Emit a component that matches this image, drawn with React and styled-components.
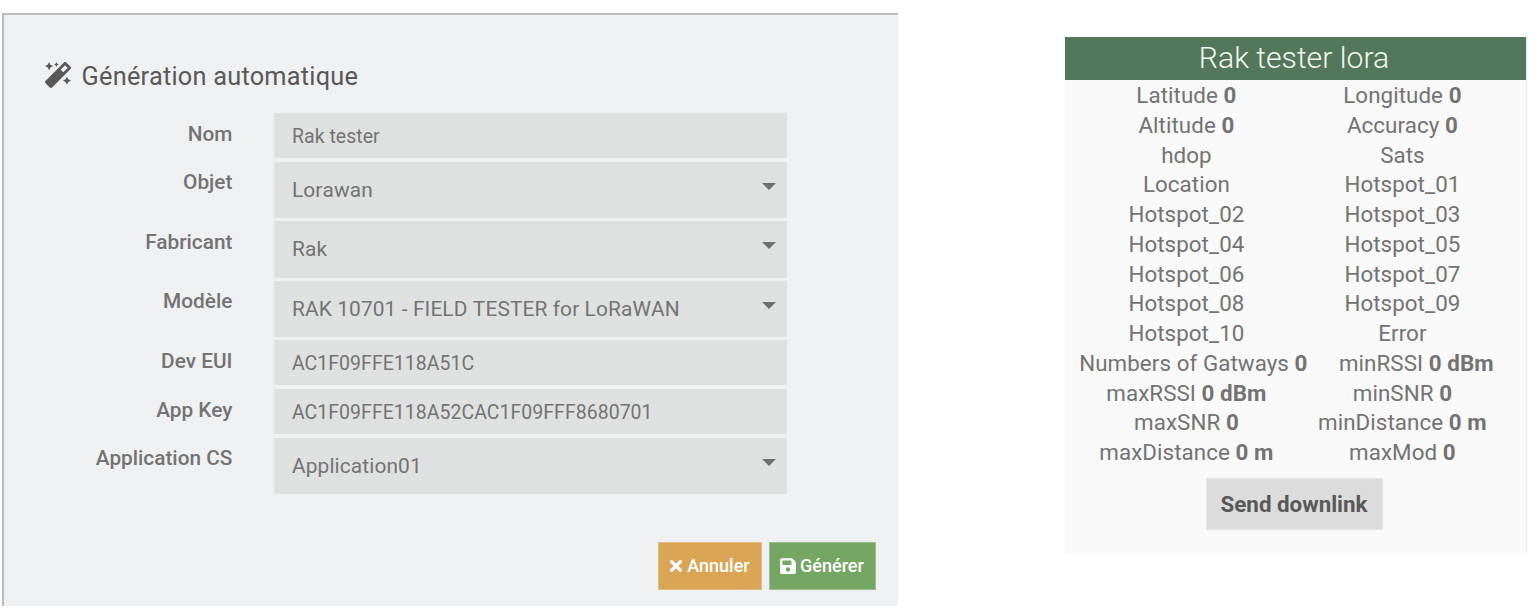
import React from "react";
import styled, { createGlobalStyle } from "styled-components";
import { FaMagic, FaTimes, FaSave } from "react-icons/fa";

const GlobalStyle = createGlobalStyle`
  * { box-sizing: border-box; }
  body {
    margin: 0;
    background: #fff;
    font-family: Roboto, sans-serif;
    color: #737373;
  }
`;

const Page = styled.main`
  display: flex;
  align-items: flex-start;
  width: 1534px;
  height: 610px;
  padding: 13px 0 0 2px;
  overflow: hidden;
`;

const Dialog = styled.section`
  display: flex;
  flex-direction: column;
  width: 896px;
  height: 593px;
  padding: 46px 22px 16px 40px;
  background: #eff0f2;
  border-top: 2px solid #bcbcbc;
  border-left: 2px solid #bcbcbc;
`;

const Title = styled.h2`
  display: flex;
  align-items: center;
  gap: 10.6px;
  height: 30px;
  margin: 0 0 22px;
  padding-left: 1px;
  font-size: 25.3px;
  font-weight: 400;
  letter-spacing: 0.24px;
  color: #585858;
  white-space: nowrap;

  svg { width: 26px; height: 26px; margin-top: -2px; }
`;

const Form = styled.div`
  display: flex;
  flex-direction: column;
  gap: 4.2px;
  width: 743px;
`;

const FormRow = styled.div`
  display: grid;
  grid-template-columns: 188.4px 512.8px;
  column-gap: 41.8px;
  height: ${(p) => (p.$select ? "56.6px" : "44.5px")};
  margin-bottom: ${(p) => (p.$select ? "-1.2px" : "0")};
`;

const Label = styled.label`
  padding-top: 8.5px;
  font-size: 20.8px;
  line-height: 25px;
  font-weight: 500;
  text-align: right;
  white-space: nowrap;
`;

const Field = styled.div`
  display: flex;
  align-items: ${(p) => (p.$select ? "flex-start" : "center")};
  justify-content: space-between;
  padding: ${(p) => (p.$select ? "16.2px 11px 0 17.8px" : "2px 11px 0 17.8px")};
  background: #dfe1e0;
  font-size: ${(p) => (p.$select ? "20.9px" : "19.45px")};
  font-kerning: ${(p) => (p.$select ? "none" : "auto")};
  letter-spacing: ${(p) => (p.$select ? "0.11px" : "0.06px")};
  line-height: 25px;
  white-space: nowrap;
`;

const Caret = styled.span`
  width: 0;
  height: 0;
  margin-top: 4.8px;
  border: 7.5px solid transparent;
  border-top-color: #6e6e6e;
  border-bottom: 0;
`;

const Actions = styled.div`
  display: flex;
  justify-content: flex-end;
  gap: 7px;
  margin-top: auto;
`;

const ActionButton = styled.button`
  display: flex;
  align-items: center;
  justify-content: center;
  gap: 4px;
  width: ${(p) => p.$width}px;
  height: 48px;
  padding: 0 1px 1px 0;
  border: 1px solid ${(p) => p.$edge};
  background: ${(p) => p.$fill};
  color: #fff;
  font: 500 18px Roboto, sans-serif;

  svg { width: ${(p) => p.$icon}px; height: 18px; flex: none; }
`;

const Card = styled.section`
  display: flex;
  flex-direction: column;
  align-items: center;
  width: 462px;
  height: 516px;
  margin: 24px 0 0 167px;
  padding-right: 3px;
  background: #f9f9f9;
  border-right: 1px solid #e6e6e6;
`;

const CardTitle = styled.h2`
  align-self: flex-start;
  width: 461px;
  height: 43px;
  margin: 0;
  padding-right: 3px;
  background: #53775b;
  color: #f2f5f2;
  font-size: 30.2px;
  font-weight: 300;
  line-height: 41px;
  text-align: center;
`;

const Readings = styled.div`
  width: 432px;
  padding-top: 1px;
  font-size: 22.35px;
  letter-spacing: 0.07px;
  line-height: 29.8px;
  white-space: nowrap;
`;

const ReadingRow = styled.div`
  display: flex;
  height: 29.75px;
`;

const Reading = styled.div`
  flex: none;
  min-width: 216px;
  padding: 0 0.4px 0 1.2px;
  text-align: center;

  b { font-weight: 700; }
`;

const DownlinkButton = styled.button`
  width: 177px;
  height: 52px;
  margin-top: 10.6px;
  padding: 0;
  border: 1px solid #e4e4e4;
  background: #dcdcdc;
  color: #585858;
  font: 700 22.35px Roboto, sans-serif;
`;

const fields = [
  { label: "Nom", value: "Rak tester" },
  { label: "Objet", value: "Lorawan", select: true },
  { label: "Fabricant", value: "Rak", select: true },
  { label: "Modèle", value: "RAK 10701 - FIELD TESTER for LoRaWAN", select: true },
  { label: "Dev EUI", value: "AC1F09FFE118A51C" },
  { label: "App Key", value: "AC1F09FFE118A52CAC1F09FFF8680701" },
  { label: "Application CS", value: "Application01", select: true },
];

const readingRows = [
  [["Latitude", "0"], ["Longitude", "0"]],
  [["Altitude", "0"], ["Accuracy", "0"]],
  [["hdop"], ["Sats"]],
  [["Location"], ["Hotspot_01"]],
  [["Hotspot_02"], ["Hotspot_03"]],
  [["Hotspot_04"], ["Hotspot_05"]],
  [["Hotspot_06"], ["Hotspot_07"]],
  [["Hotspot_08"], ["Hotspot_09"]],
  [["Hotspot_10"], ["Error"]],
  [["Numbers of Gatways", "0"], ["minRSSI", "0 dBm"]],
  [["maxRSSI", "0 dBm"], ["minSNR", "0"]],
  [["maxSNR", "0"], ["minDistance", "0 m"]],
  [["maxDistance", "0 m"], ["maxMod", "0"]],
];

export default function App() {
  return (
    <>
      <GlobalStyle />
      <Page>
        <Dialog>
          <Title><FaMagic />Génération automatique</Title>
          <Form>
            {fields.map(({ label, value, select }) => (
              <FormRow key={label} $select={select}>
                <Label>{label}</Label>
                <Field $select={select}>
                  {value}
                  {select && <Caret />}
                </Field>
              </FormRow>
            ))}
          </Form>
          <Actions>
            <ActionButton $width={104} $icon={14} $fill="#daa655" $edge="#e2bd83">
              <FaTimes />Annuler
            </ActionButton>
            <ActionButton $width={107} $icon={16} $fill="#76a663" $edge="#9abd8c">
              <FaSave />Générer
            </ActionButton>
          </Actions>
        </Dialog>
        <Card>
          <CardTitle>Rak tester lora</CardTitle>
          <Readings>
            {readingRows.map((row) => (
              <ReadingRow key={row[0][0]}>
                {row.map(([name, value]) => (
                  <Reading key={name}>{name}{value && <> <b>{value}</b></>}</Reading>
                ))}
              </ReadingRow>
            ))}
          </Readings>
          <DownlinkButton>Send downlink</DownlinkButton>
        </Card>
      </Page>
    </>
  );
}
